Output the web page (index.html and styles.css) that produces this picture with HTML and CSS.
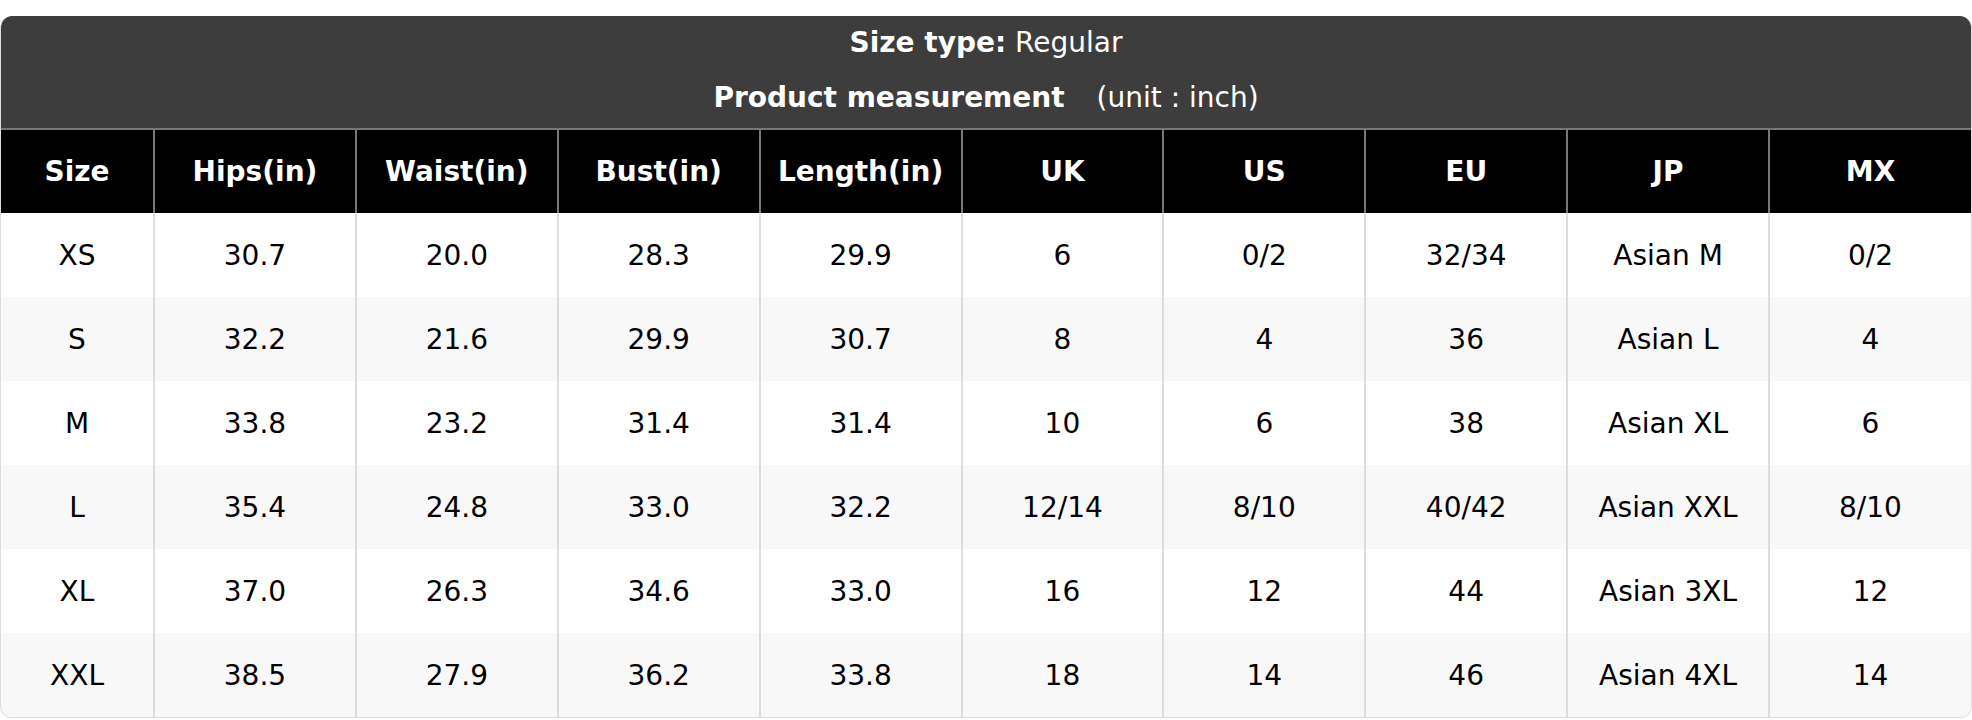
FILE: index.html
```html
<!DOCTYPE html>
<html>
<head>
<meta charset="utf-8">
<link rel="stylesheet" href="styles.css">
</head>
<body>
<div class="card">
  <div class="caption">
    <div class="cap-line"><b>Size type:</b> Regular</div>
    <div class="cap-line cap-line2"><b>Product measurement</b><span class="unit">(unit : inch)</span></div>
  </div>
  <table class="sizes">
    <colgroup>
      <col class="col-size">
      <col><col><col><col><col><col><col><col><col>
    </colgroup>
    <thead>
      <tr><th>Size</th><th>Hips(in)</th><th>Waist(in)</th><th>Bust(in)</th><th>Length(in)</th><th>UK</th><th>US</th><th>EU</th><th>JP</th><th>MX</th></tr>
    </thead>
    <tbody>
      <tr><td>XS</td><td>30.7</td><td>20.0</td><td>28.3</td><td>29.9</td><td>6</td><td>0/2</td><td>32/34</td><td>Asian M</td><td>0/2</td></tr>
      <tr><td>S</td><td>32.2</td><td>21.6</td><td>29.9</td><td>30.7</td><td>8</td><td>4</td><td>36</td><td>Asian L</td><td>4</td></tr>
      <tr><td>M</td><td>33.8</td><td>23.2</td><td>31.4</td><td>31.4</td><td>10</td><td>6</td><td>38</td><td>Asian XL</td><td>6</td></tr>
      <tr><td>L</td><td>35.4</td><td>24.8</td><td>33.0</td><td>32.2</td><td>12/14</td><td>8/10</td><td>40/42</td><td>Asian XXL</td><td>8/10</td></tr>
      <tr><td>XL</td><td>37.0</td><td>26.3</td><td>34.6</td><td>33.0</td><td>16</td><td>12</td><td>44</td><td>Asian 3XL</td><td>12</td></tr>
      <tr><td>XXL</td><td>38.5</td><td>27.9</td><td>36.2</td><td>33.8</td><td>18</td><td>14</td><td>46</td><td>Asian 4XL</td><td>14</td></tr>
    </tbody>
  </table>
</div>
</body>
</html>
```
FILE: styles.css
```css
html, body {
  margin: 0;
  padding: 0;
  background: #ffffff;
}
body {
  padding-top: 16px;
  font-family: "DejaVu Sans", "Liberation Sans", sans-serif;
  font-size: 28px;
  color: #000;
}
.card {
  border: 1px solid #dddddd;
  border-top: none;
  border-radius: 12px;
  overflow: hidden;
  background: #fff;
}
.caption {
  background: #3d3d3d;
  color: #ffffff;
  text-align: center;
  height: 114px;
  box-sizing: border-box;
  border-bottom: 2px solid #777777;
  padding-top: 9px;
}
.cap-line {
  line-height: 36px;
}
.cap-line2 {
  margin-top: 19px;
}
.unit {
  margin-left: 32px;
}
.sizes {
  width: 100%;
  border-collapse: collapse;
  table-layout: fixed;
}
.col-size {
  width: 153px;
}
.sizes th {
  background: #000;
  color: #fff;
  font-weight: bold;
  height: 83px;
  padding: 0;
  text-align: center;
  border-left: 2px solid #777777;
  box-sizing: border-box;
}
.sizes th:first-child,
.sizes td:first-child {
  border-left: none;
}
.sizes td {
  height: 84px;
  padding: 0;
  text-align: center;
  border-left: 2px solid #dddddd;
  box-sizing: border-box;
}
.sizes tbody tr:nth-child(even) td {
  background: #f8f8f8;
}
```
